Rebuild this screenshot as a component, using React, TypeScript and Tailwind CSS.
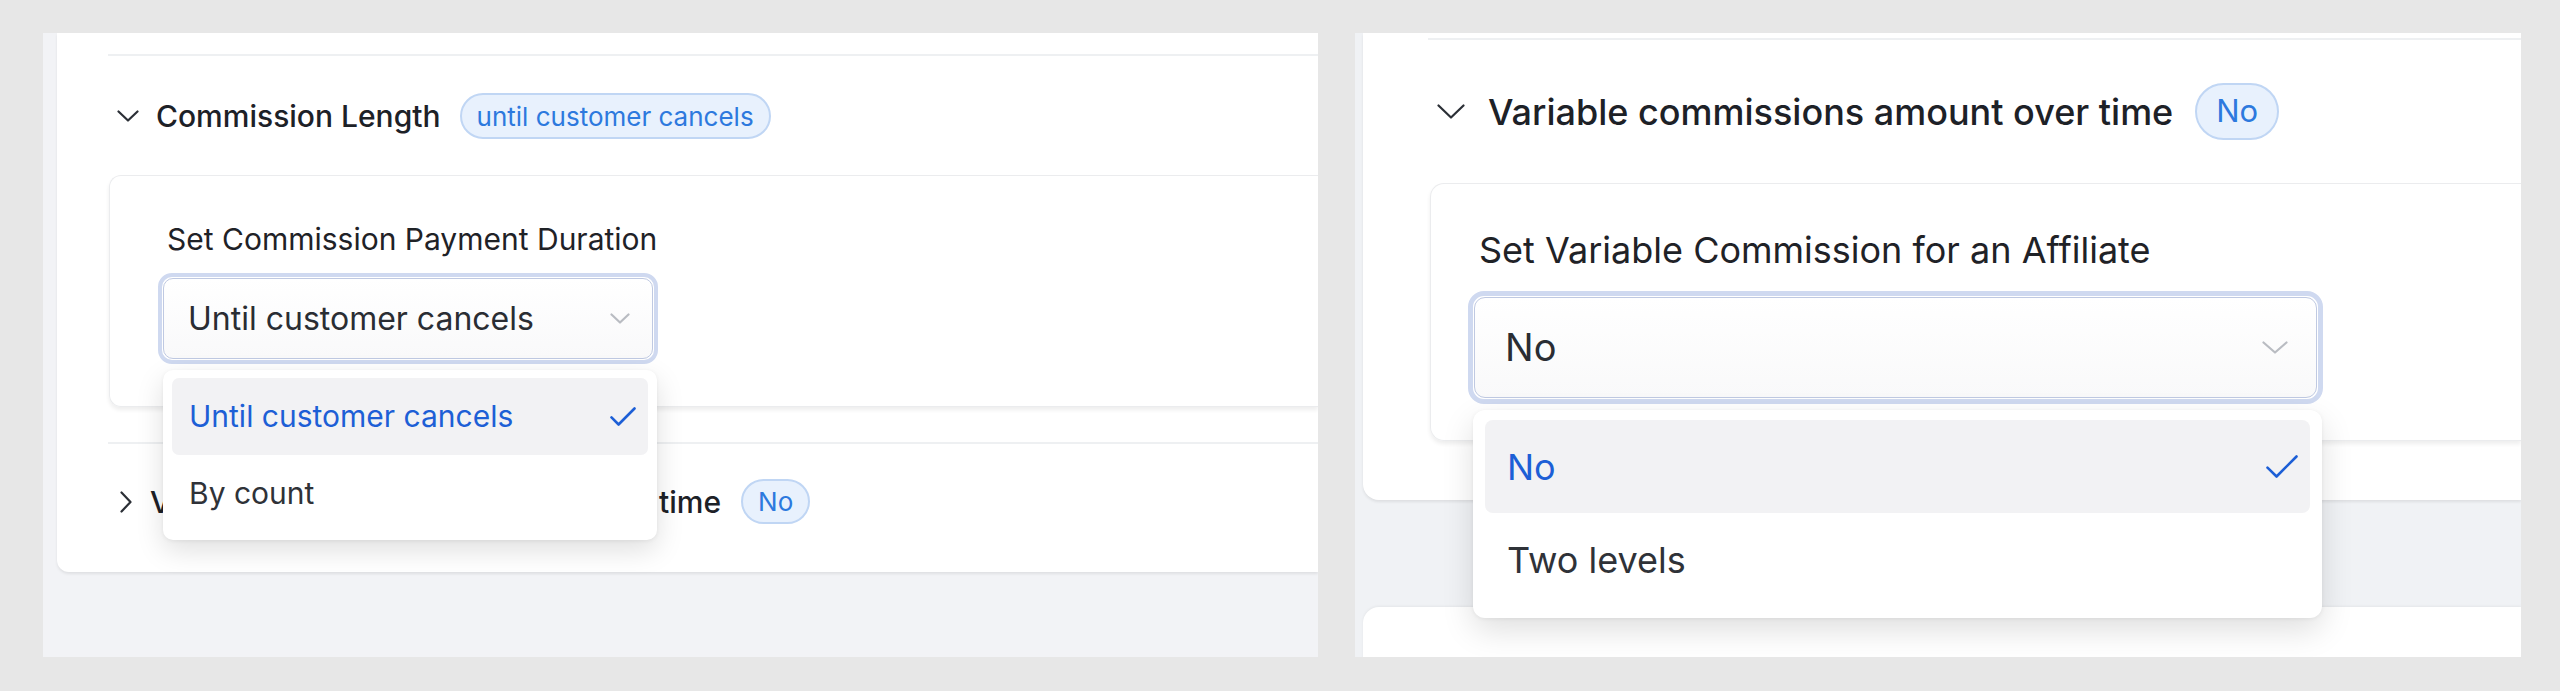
import * as React from "react";

const font = { fontFamily: "Inter, 'Noto Sans', sans-serif" };

function ChevronDown({ w, h, className }: { w: number; h: number; className?: string }) {
  return (
    <svg width={w} height={h} viewBox={`0 0 ${w} ${h}`} className={className} fill="none">
      <polyline points={`1.5 1.5 ${w / 2} ${h - 1.5} ${w - 1.5} 1.5`} stroke="currentColor" strokeWidth="2.2" strokeLinecap="round" strokeLinejoin="round" />
    </svg>
  );
}

function ChevronRight({ w, h }: { w: number; h: number }) {
  return (
    <svg width={w} height={h} viewBox={`0 0 ${w} ${h}`} fill="none">
      <polyline points={`1.5 1.5 ${w - 1.5} ${h / 2} 1.5 ${h - 1.5}`} stroke="currentColor" strokeWidth="2.2" strokeLinecap="round" strokeLinejoin="round" />
    </svg>
  );
}

function Check({ w, h }: { w: number; h: number }) {
  return (
    <svg width={w} height={h} viewBox={`0 0 ${w} ${h}`} fill="none">
      <polyline points={`1.5 ${h * 0.55} ${w * 0.33} ${h - 1.5} ${w - 1.5} 1.5`} stroke="currentColor" strokeWidth="2.6" strokeLinecap="round" strokeLinejoin="round" />
    </svg>
  );
}

function LeftShot() {
  return (
    <div className="relative w-[1275px] h-[624px] shrink-0 overflow-hidden bg-[#f2f3f6] pl-[14px]">
      <div className="h-[539px] bg-white rounded-bl-[12px] shadow-[0_2px_3px_rgba(0,0,0,0.08)] pt-[21px]">
        <div className="ml-[51px] h-[2px] bg-[#eef0f2]" />

        <div className="mt-[37px] h-[46px] flex items-center pl-[60px]">
          <ChevronDown w={22} h={12} className="text-[#2b2f36]" />
          <span className="ml-[17px] text-[30px] leading-[36px] font-medium text-[#1d2127]">Commission Length</span>
          <span className="ml-[19px] h-[46px] px-[15px] flex items-center rounded-full border-2 border-[#c0d6f4] bg-[#e8f1fd] text-[26px] text-[#2d79de]">
            until customer cancels
          </span>
        </div>

        <div className="mt-[36px] ml-[52px] h-[232px] rounded-l-[12px] border border-r-0 border-[#ebecee] shadow-[0_3px_4px_rgba(0,0,0,0.07)] pt-[45px]">
          <div className="pl-[57px] text-[30px] leading-[36px] text-[#1f2227]">Set Commission Payment Duration</div>
          <div className="mt-[16px] ml-[48px] w-[500px] h-[91px] rounded-[14px] border-[4px] border-[#cfd9f0] p-[1px]">
            <div className="h-full rounded-[10px] border border-[#bfc9e2] bg-gradient-to-b from-white to-[#f9f9fa] flex items-center justify-between pl-[24px] pr-[22px]">
              <span className="text-[32px] text-[#2a2d33]">Until customer cancels</span>
              <ChevronDown w={20} h={11} className="text-[#b9bcc2]" />
            </div>
          </div>
        </div>

        <div className="mt-[35px] ml-[51px] h-[2px] bg-[#eef0f2]" />

        <div className="mt-[35px] h-[45px] flex items-center pl-[63px]">
          <span className="text-[#2b2f36]"><ChevronRight w={12} h={22} /></span>
          <span className="ml-[18px] text-[30px] leading-[36px] font-medium text-[#1d2127]">Variable commissions amount over time</span>
          <span className="ml-[20px] h-[45px] px-[15px] flex items-center rounded-full border-2 border-[#c0d6f4] bg-[#e8f1fd] text-[26px] text-[#2d79de]">
            No
          </span>
        </div>
      </div>

      <div className="absolute left-[120px] top-[337px] w-[494px] h-[170px] rounded-[10px] bg-white shadow-[0_10px_28px_rgba(0,0,0,0.13),0_1px_4px_rgba(0,0,0,0.06)] p-[8px] pl-[9px] pr-[9px]">
        <div className="h-[77px] rounded-[7px] bg-[#f2f2f4] flex items-center justify-between pl-[17px] pr-[12px] text-[#1d5fd6]">
          <span className="text-[30px]">Until customer cancels</span>
          <Check w={26} h={19} />
        </div>
        <div className="h-[77px] flex items-center pl-[17px]">
          <span className="text-[30px] text-[#2f3238]">By count</span>
        </div>
      </div>
    </div>
  );
}

function RightShot() {
  return (
    <div className="relative w-[1166px] h-[624px] shrink-0 overflow-hidden bg-[#f0f2f5] pl-[8px]">
      <div className="h-[467px] bg-white rounded-bl-[16px] shadow-[0_2px_3px_rgba(0,0,0,0.08)] pt-[5px]">
        <div className="ml-[65px] h-[2px] bg-[#eef0f2]" />

        <div className="mt-[43px] h-[57px] flex items-center pl-[74px]">
          <ChevronDown w={28} h={15} className="text-[#2b2f36]" />
          <span className="ml-[23px] text-[36px] leading-[44px] font-medium text-[#1d2127]">Variable commissions amount over time</span>
          <span className="ml-[22px] h-[57px] px-[19px] flex items-center rounded-full border-2 border-[#c0d6f4] bg-[#e8f1fd] text-[31px] text-[#2d79de]">
            No
          </span>
        </div>

        <div className="mt-[43px] ml-[67px] h-[258px] rounded-l-[14px] border border-r-0 border-[#ebecee] shadow-[0_3px_4px_rgba(0,0,0,0.07)] pt-[44px]">
          <div className="pl-[48px] text-[36px] leading-[44px] text-[#1f2227]">Set Variable Commission for an Affiliate</div>
          <div className="mt-[19px] ml-[37px] w-[855px] h-[113px] rounded-[16px] border-[5px] border-[#cfd9f0] p-[1px]">
            <div className="h-full rounded-[11px] border border-[#bfc9e2] bg-gradient-to-b from-white to-[#f9f9fa] flex items-center justify-between pl-[30px] pr-[28px]">
              <span className="text-[38px] text-[#2a2d33]">No</span>
              <ChevronDown w={26} h={13} className="text-[#b9bcc2]" />
            </div>
          </div>
        </div>
      </div>

      <div className="mt-[107px] h-[60px] bg-white rounded-tl-[16px] shadow-[0_-1px_3px_rgba(0,0,0,0.05)]" />

      <div className="absolute left-[118px] top-[377px] w-[849px] h-[208px] rounded-[12px] bg-white shadow-[0_12px_32px_rgba(0,0,0,0.13),0_1px_4px_rgba(0,0,0,0.06)] px-[12px] pt-[10px]">
        <div className="h-[93px] rounded-[8px] bg-[#f2f2f4] flex items-center justify-between pl-[22px] pr-[12px] text-[#1d5fd6]">
          <span className="text-[36px]">No</span>
          <Check w={32} h={23} />
        </div>
        <div className="h-[93px] flex items-center pl-[22px]">
          <span className="text-[36px] text-[#2f3238]">Two levels</span>
        </div>
      </div>
    </div>
  );
}

export default function App() {
  return (
    <div className="w-[2560px] h-[691px] bg-[#e7e7e7] flex pt-[33px] pl-[43px] gap-[37px]" style={font}>
      <LeftShot />
      <RightShot />
    </div>
  );
}
